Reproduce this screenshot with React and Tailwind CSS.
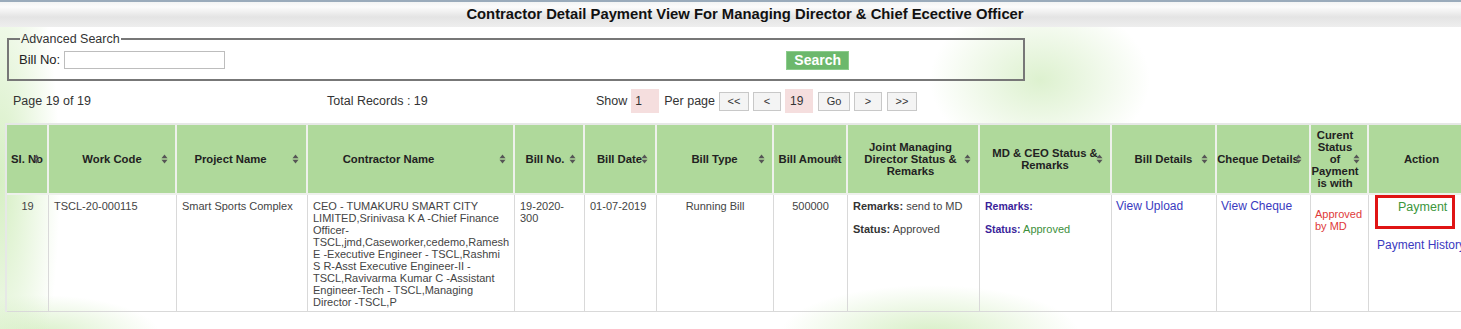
import React from "react";

const SortIcon = () => (
  <svg width="7" height="10" viewBox="0 0 7 10" className="absolute right-[7px] top-1/2 -translate-y-1/2">
    <path d="M3.5 0.5 L6.5 4.2 L0.5 4.2 Z" fill="#555" />
    <path d="M0.5 5.8 L6.5 5.8 L3.5 9.5 Z" fill="#555" />
  </svg>
);

const headers = [
  { w: "w-[42px]", label: ["Sl. No"], sort: true, pad: "pl-[2px] pr-[2px]" },
  { w: "w-[128px]", label: ["Work Code"], sort: true },
  { w: "w-[131px]", label: ["Project Name"], sort: true, pad: "pl-[3px] pr-[25px]" },
  { w: "w-[207px]", label: ["Contractor Name"], sort: true, pad: "pl-[3px] pr-[47px]" },
  { w: "w-[70px]", label: ["Bill No."], sort: true, pad: "pl-[3px] pr-[11px]" },
  { w: "w-[72px]", label: ["Bill Date"], sort: true, pad: "pl-[3px] pr-[4px]" },
  { w: "w-[117px]", label: ["Bill Type"], sort: true },
  { w: "w-[74px]", label: ["Bill Amount"], sort: true, pad: "pl-0 pr-0" },
  { w: "w-[132px]", label: ["Joint Managing", "Director Status &", "Remarks"], sort: true, pad: "pl-[3px] pr-[8px]" },
  { w: "w-[132px]", label: ["MD & CEO Status &", "Remarks"], sort: true },
  { w: "w-[105px]", label: ["Bill Details"], sort: true },
  { w: "w-[94px]", label: ["Cheque Details"], sort: true, pad: "pl-0 pr-[10px]" },
  { w: "w-[58px]", label: ["Curent", "Status", "of", "Payment", "is with"], sort: true, pad: "pl-0 pr-[8px]" },
  { w: "w-[101px]", label: ["Action"], sort: false, pad: "pl-[6px] pr-0" },
];

const contractor = [
  "CEO - TUMAKURU SMART CITY",
  "LIMITED,Srinivasa K A -Chief Finance",
  "Officer-",
  "TSCL,jmd,Caseworker,cedemo,Ramesh",
  "E -Executive Engineer - TSCL,Rashmi",
  "S R-Asst Executive Engineer-II -",
  "TSCL,Ravivarma Kumar C -Assistant",
  "Engineer-Tech - TSCL,Managing",
  "Director -TSCL,P",
];

const PagerBtn = ({ children, w = "w-[30px]" }) => (
  <button className={`${w} h-[19px] bg-[#f4f4f4] border border-[#c8c8c8] text-[11px] text-[#333] leading-none`}>
    {children}
  </button>
);

export default function App() {
  // padding is set per cell so that no two padding classes fight
  const td = "border-r border-b border-[#d9d9d9] align-top text-[11px] leading-[12px] text-[#444]";
  const std = `${td} pt-[5px] px-[5px]`;
  return (
    <div
      className="w-[1461px] h-[329px] overflow-hidden bg-white font-['Liberation_Sans',Arial,sans-serif] bg-[radial-gradient(ellipse_60px_260px_at_0px_180px,#d6efc4,transparent),radial-gradient(ellipse_110px_80px_at_1040px_80px,#ddf1cf,transparent),radial-gradient(ellipse_150px_50px_at_930px_335px,#d7efc6,transparent),radial-gradient(ellipse_120px_40px_at_40px_335px,#d9f0c9,transparent)]"
    >
      {/* Title bar */}
      <div className="h-[27px] border-t-2 border-[#9aabbb] bg-[linear-gradient(to_bottom,#f3f4f4,#fbfbfb_20%,#e4e4e4_60%,#eeeeee)] flex items-center justify-center">
        <h1 className="text-[14.8px] font-bold text-[#111] pl-[29px]">
          Contractor Detail Payment View For Managing Director &amp; Chief Ecective Officer
        </h1>
      </div>

      {/* Advanced search */}
      <fieldset className="ml-[7px] mt-[5px] w-[1018px] h-[49px] border-2 border-[#777] px-[10px] pt-0">
        <legend className="text-[12.5px] text-[#333] px-[1px] leading-[14px] ml-[1px]">Advanced Search</legend>
        <div className="flex items-center h-[20px] mt-[4px]">
          <span className="text-[13px] text-[#222] mr-[4px]">Bill No:</span>
          <input className="w-[161px] h-[18px] border border-[#bdbdbd] bg-white" />
          <button className="ml-[561px] w-[63px] h-[19px] bg-[#6cb86c] border border-[#8ccc8c] text-white font-bold text-[14px] leading-none">
            Search
          </button>
        </div>
      </fieldset>

      {/* Pager row */}
      <div className="flex items-center h-[24px] mt-[8px] text-[12.5px] text-[#333]">
        <span className="ml-[13px] w-[314px]">Page 19 of 19</span>
        <span className="w-[269px]">Total Records : 19</span>
        <span className="mr-[4px]">Show</span>
        <input defaultValue="1" className="w-[28px] h-[24px] bg-[#f5dede] px-[4px] text-[12px] text-[#333]" />
        <span className="ml-[5px] mr-[4px]">Per page</span>
        <PagerBtn>&lt;&lt;</PagerBtn>
        <span className="w-[4px]" />
        <PagerBtn w="w-[28px]">&lt;</PagerBtn>
        <span className="w-[4px]" />
        <input defaultValue="19" className="w-[28px] h-[24px] bg-[#f5dede] px-[5px] text-[12px] text-[#333]" />
        <span className="w-[5px]" />
        <PagerBtn w="w-[32px]">Go</PagerBtn>
        <span className="w-[4px]" />
        <PagerBtn w="w-[28px]">&gt;</PagerBtn>
        <span className="w-[5px]" />
        <PagerBtn>&gt;&gt;</PagerBtn>
      </div>

      {/* Table */}
      <table className="ml-[5px] mt-[10px] w-[1465px] table-fixed border-separate border-spacing-0 border-l-2 border-t-2 border-[#e6e8e6]">
        <colgroup>
          {headers.map((h, i) => (
            <col key={i} className={h.w} />
          ))}
        </colgroup>
        <thead>
          <tr className="h-[70px]">
            {headers.map((h, i) => (
              <th
                key={i}
                className={`relative bg-[#afd99b] border-r-2 border-b-2 border-[#eef1ec] text-[11.3px] leading-[12px] font-bold text-[#222] text-center ${h.pad || "pl-[3px] pr-[3px]"}`}
              >
                {h.label.map((l, j) => (
                  <div key={j} className="whitespace-nowrap">{l}</div>
                ))}
                {h.sort && <SortIcon />}
              </th>
            ))}
          </tr>
        </thead>
        <tbody>
          <tr className="h-[117px]">
            <td className={`${std} text-center`}>19</td>
            <td className={std}>TSCL-20-000115</td>
            <td className={std}>Smart Sports Complex</td>
            <td className={std}>
              {contractor.map((l, i) => (
                <div key={i} className="whitespace-nowrap">{l}</div>
              ))}
            </td>
            <td className={std}>
              19-2020-
              <br />
              300
            </td>
            <td className={std}>01-07-2019</td>
            <td className={`${std} text-center`}>Running Bill</td>
            <td className={`${std} text-center`}>500000</td>
            <td className={std}>
              <div className="mb-[11px]">
                <b className="text-[#333]">Remarks:</b> send to MD
              </div>
              <div>
                <b className="text-[#333]">Status:</b> Approved
              </div>
            </td>
            <td className={std}>
              <div className="mb-[11px]">
                <b className="text-[#3a1f9a] text-[10.5px]">Remarks:</b>
              </div>
              <div>
                <b className="text-[#3a1f9a] text-[10.5px]">Status:</b>{" "}
                <span className="text-[#3c8f3c]">Approved</span>
              </div>
            </td>
            <td className={`${td} pt-[5px] pl-[4px] pr-[4px]`}>
              <a className="text-[12px] text-[#3a3ac0]">View Upload</a>
            </td>
            <td className={`${td} pt-[5px] pl-[4px] pr-[4px]`}>
              <a className="text-[12px] text-[#3a3ac0]">View Cheque</a>
            </td>
            <td className={`${td} pt-[13px] pl-[4px] pr-[2px] text-[#e03a3a]`}>
              Approved
              <br />
              by MD
            </td>
            <td className={`${td} pt-0 pl-[6px] pr-0`}>
              <div className="w-[80px] h-[34px] border-[3px] border-[#e01414] pt-[3px] pl-[20px] text-[12.5px] text-[#3c963c]">
                Payment
              </div>
              <div className="mt-[10px] ml-[2px] whitespace-nowrap text-[12px] text-[#3a3ac0]">Payment History</div>
            </td>
          </tr>
        </tbody>
      </table>
    </div>
  );
}
